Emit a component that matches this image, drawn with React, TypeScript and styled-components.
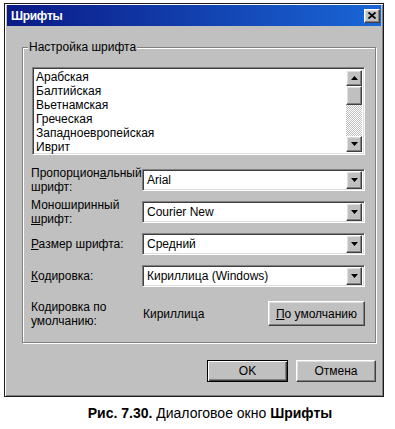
import React from "react";
import styled, { createGlobalStyle } from "styled-components";

const GlobalStyle = createGlobalStyle`
  body {
    margin: 0;
    background: #fff;
    font-family: "Liberation Sans", Arial, sans-serif;
  }
  * { box-sizing: border-box; }
`;

const raised = `
  border: 1px solid;
  border-color: #fff #404040 #404040 #fff;
  box-shadow: inset -1px -1px 0 #808080, inset 1px 1px 0 #dfdfdf;
  background: #c0c0c0;
`;

const sunken = `
  border: 1px solid;
  border-color: #808080 #fff #fff #808080;
  box-shadow: inset 1px 1px 0 #404040, inset -1px -1px 0 #dfdfdf;
`;

const Page = styled.div`
  width: 395px;
  height: 429px;
  padding: 3px 0 0 4px;
`;

const Window = styled.div`
  width: 380px;
  height: 394px;
  background: #c0c0c0;
  border: 1px solid #1a1a1a;
  box-shadow: inset 1px 1px 0 #fff, inset -1px -1px 0 #808080;
  padding: 1px 2px 2px 2px;
  display: flex;
  flex-direction: column;
`;

const TitleBar = styled.div`
  height: 21px;
  display: flex;
  align-items: center;
  justify-content: space-between;
  padding: 0 1px 0 4px;
  background: linear-gradient(to right, #0a1a86, #1a66d6);
`;

const Title = styled.span`
  color: #fff;
  font-weight: bold;
  font-size: 12px;
  letter-spacing: -0.3px;
`;

const CloseButton = styled.div`
  ${raised}
  width: 16px;
  height: 14px;
  display: flex;
  align-items: center;
  justify-content: center;
`;

const Body = styled.div`
  flex: 1;
  display: flex;
  flex-direction: column;
  padding: 14px 5px 0 15px;
`;

const Group = styled.fieldset`
  margin: 0;
  padding: 13px 10px 16px 9px;
  border: 1px solid #808080;
  box-shadow: inset 1px 1px 0 #fff, 1px 1px 0 #fff;
`;

const Legend = styled.legend`
  font-size: 12px;
  line-height: 14px;
  padding: 0 1px;
  margin-left: -4px;
  background: #c0c0c0;
  color: #000;
`;

const ListBox = styled.div`
  ${sunken}
  background: #fff;
  height: 88px;
  display: flex;
  padding: 2px;
`;

const Items = styled.div`
  flex: 1;
  padding-left: 1px;
`;

const Item = styled.div`
  font-size: 12px;
  line-height: 14px;
  color: #000;
`;

const ScrollBar = styled.div`
  width: 16px;
  display: flex;
  flex-direction: column;
`;

const ScrollButton = styled.div<{ $h: number }>`
  ${raised}
  width: 16px;
  height: ${(p) => p.$h}px;
  flex: none;
  display: flex;
  align-items: center;
  justify-content: center;
`;

const Track = styled.div`
  flex: 1;
  background: repeating-conic-gradient(#fff 0 25%, #c0c0c0 0 50%) 0 0 / 2px 2px;
`;

const Rows = styled.div`
  margin-top: 14px;
  display: flex;
  flex-direction: column;
  gap: 10px;
`;

const Row = styled.div<{ $h: number; $top?: number }>`
  height: ${(p) => p.$h}px;
  margin-top: ${(p) => p.$top || 0}px;
  display: flex;
  align-items: center;
`;

const Label = styled.div`
  width: 111px;
  flex: none;
  font-size: 12px;
  line-height: 14px;
  color: #000;
  margin-left: -1px;
`;

const Combo = styled.div`
  ${sunken}
  flex: 1;
  height: 22px;
  background: #fff;
  display: flex;
  align-items: center;
  padding: 2px;
`;

const ComboText = styled.span`
  flex: 1;
  font-size: 12px;
  padding-left: 2px;
`;

const DropButton = styled.div`
  ${raised}
  width: 16px;
  height: 18px;
  display: flex;
  align-items: center;
  justify-content: center;
`;

const Value = styled.span`
  flex: 1;
  font-size: 12px;
  padding-left: 1px;
`;

const Button = styled.div<{ $w: number; $h: number; $default?: boolean }>`
  ${raised}
  width: ${(p) => p.$w}px;
  height: ${(p) => p.$h}px;
  display: flex;
  align-items: center;
  justify-content: center;
  font-size: 12px;
  color: #000;
  ${(p) =>
    p.$default &&
    `
    border: 1px solid #000;
    box-shadow: inset 1px 1px 0 #fff, inset -1px -1px 0 #404040, inset -2px -2px 0 #808080;
  `}
`;

const Footer = styled.div`
  margin-top: 17px;
  display: flex;
  justify-content: flex-end;
  gap: 8px;
`;

const Caption = styled.div`
  margin-top: 7px;
  padding-left: 21px;
  text-align: center;
  font-size: 14px;
  line-height: 18px;
  color: #000;
`;

const Arrow = ({ up }: { up?: boolean }) => (
  <svg width="7" height="4" viewBox="0 0 7 4">
    <polygon points={up ? "3.5,0 7,4 0,4" : "0,0 7,0 3.5,4"} fill="#000" />
  </svg>
);

const CloseIcon = () => (
  <svg width="8" height="7" viewBox="0 0 8 7">
    <path d="M0.5 0.5 L7.5 6.5 M7.5 0.5 L0.5 6.5" stroke="#000" strokeWidth="1.8" />
  </svg>
);

const charsets = [
  "Арабская",
  "Балтийская",
  "Вьетнамская",
  "Греческая",
  "Западноевропейская",
  "Иврит",
];

interface ComboProps {
  value: string;
}

const ComboBox: React.FC<ComboProps> = ({ value }) => (
  <Combo>
    <ComboText>{value}</ComboText>
    <DropButton>
      <Arrow />
    </DropButton>
  </Combo>
);

export default function App() {
  return (
    <Page>
      <GlobalStyle />
      <Window>
        <TitleBar>
          <Title>Шрифты</Title>
          <CloseButton>
            <CloseIcon />
          </CloseButton>
        </TitleBar>
        <Body>
          <Group>
            <Legend>Настройка шрифта</Legend>
            <ListBox>
              <Items>
                {charsets.map((c) => (
                  <Item key={c}>{c}</Item>
                ))}
              </Items>
              <ScrollBar>
                <ScrollButton $h={16}>
                  <Arrow up />
                </ScrollButton>
                <ScrollButton $h={19} />
                <Track />
                <ScrollButton $h={16}>
                  <Arrow />
                </ScrollButton>
              </ScrollBar>
            </ListBox>
            <Rows>
              <Row $h={22}>
                <Label>
                  Пропорцион<u>а</u>льный
                  <br />
                  шрифт:
                </Label>
                <ComboBox value="Arial" />
              </Row>
              <Row $h={22}>
                <Label>
                  Моноширинный
                  <br />
                  <u>ш</u>рифт:
                </Label>
                <ComboBox value="Courier New" />
              </Row>
              <Row $h={22}>
                <Label>
                  <u>Р</u>азмер шрифта:
                </Label>
                <ComboBox value="Средний" />
              </Row>
              <Row $h={22}>
                <Label>
                  <u>К</u>одировка:
                </Label>
                <ComboBox value="Кириллица (Windows)" />
              </Row>
              <Row $h={25} $top={4}>
                <Label>
                  Кодировка по
                  <br />
                  умолчанию:
                </Label>
                <Value>Кириллица</Value>
                <Button $w={97} $h={25}>
                  <span>
                    <u>П</u>о умолчанию
                  </span>
                </Button>
              </Row>
            </Rows>
          </Group>
          <Footer>
            <Button $w={81} $h={22} $default>
              OK
            </Button>
            <Button $w={80} $h={22}>
              Отмена
            </Button>
          </Footer>
        </Body>
      </Window>
      <Caption>
        <b>Рис. 7.30.</b> Диалоговое окно <b>Шрифты</b>
      </Caption>
    </Page>
  );
}
